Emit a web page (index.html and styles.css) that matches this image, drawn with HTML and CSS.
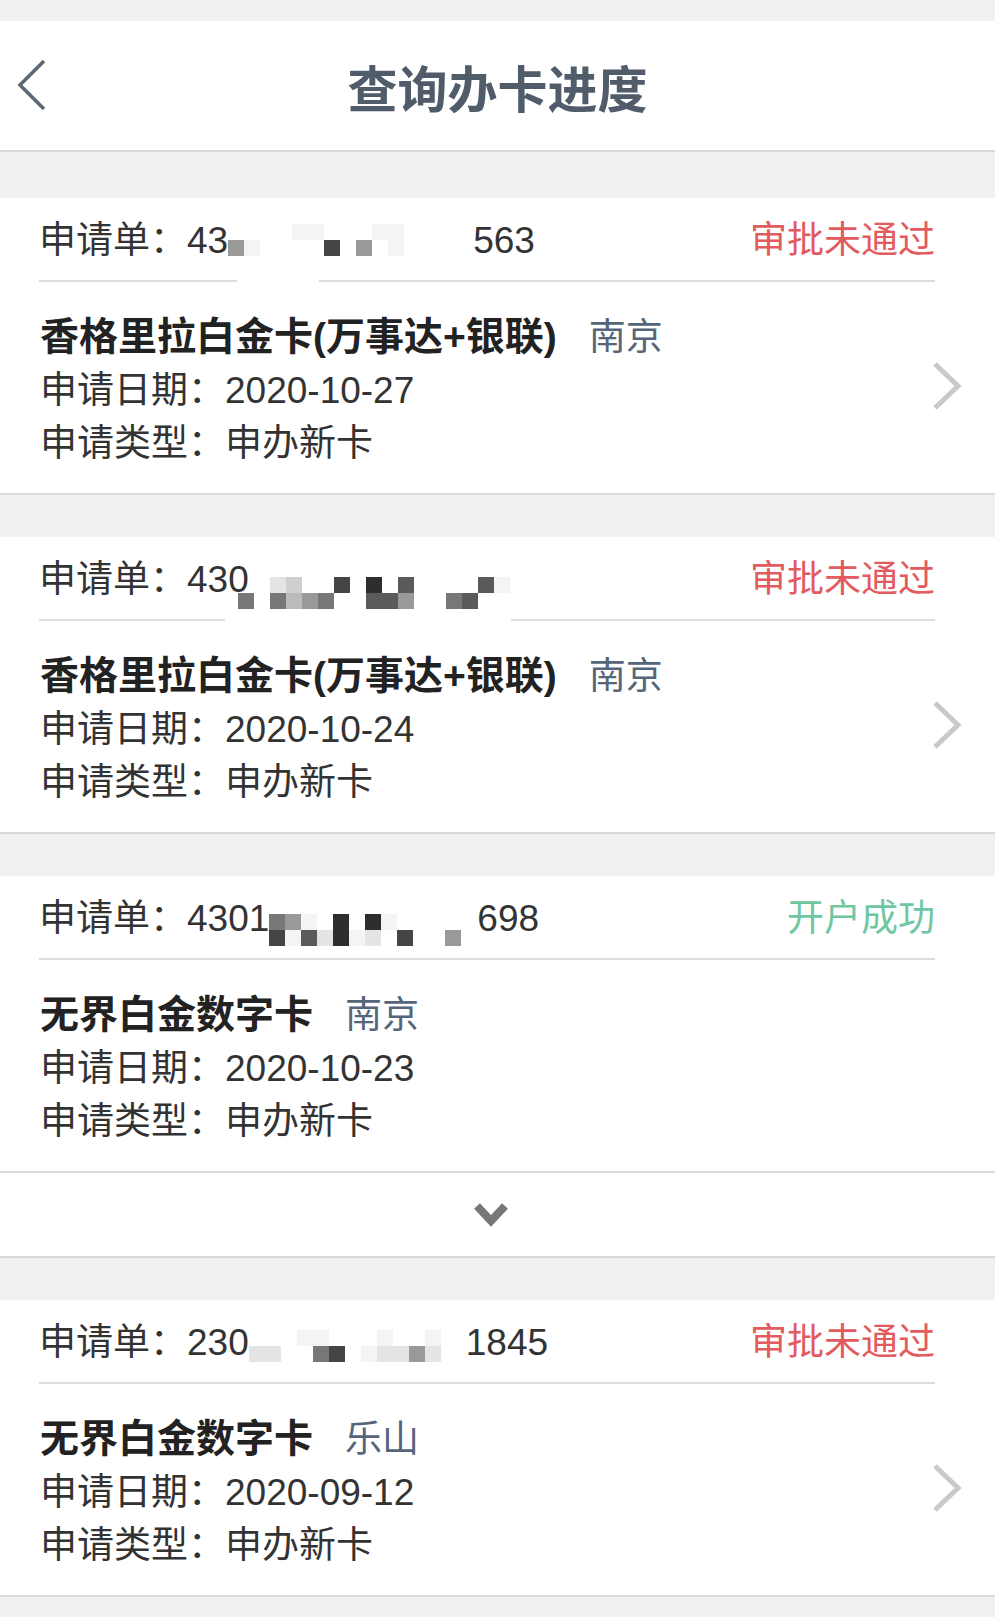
FILE: index.html
```html
<!DOCTYPE html>
<html lang="zh-CN">
<head>
  <meta charset="UTF-8" />
  <meta name="viewport" content="width=device-width, initial-scale=1.0"/>
  <title>查询办卡进度</title>
  <link rel="stylesheet" href="styles.css">
</head>
<body>
  <header class="nav">
    <svg class="nav-back" viewBox="0 0 30 52"><polyline points="27,2 3,26 27,50" /></svg>
    <h1 class="nav-title">查询办卡进度</h1>
    <span></span>
  </header>

  <main class="list">
    <section class="card">
      <div class="card-head">
        <span class="app-no">申请单：43<span class="mosaic m1"><i></i><i></i><i></i><i></i><i class="s1"></i><i class="s1"></i><i></i><i></i><i></i><i class="s1"></i><i class="s1"></i><i></i><i></i><i></i><i></i><i class="s5"></i><i class="s1"></i><i></i><i></i><i></i><i></i><i class="s8"></i><i></i><i class="s5"></i><i></i><i class="s1"></i><i></i><i></i><i></i><i></i></span>563</span>
        <span class="status">审批未通过</span>
      </div>
      <div class="card-body">
        <div class="info">
          <div class="card-name">香格里拉白金卡(万事达+银联)<span class="city">南京</span></div>
          <div class="line">申请日期：2020-10-27</div>
          <div class="line">申请类型：申办新卡</div>
        </div>
        <svg class="arrow" viewBox="0 0 32 50"><polyline points="4,3 27,25 4,47" /></svg>
      </div>
    </section>

    <section class="card">
      <div class="card-head">
        <span class="app-no">申请单：430<span class="mosaic m2"><i></i><i></i><i class="s2"></i><i class="s3"></i><i></i><i></i><i class="s8"></i><i></i><i class="s9"></i><i></i><i class="s7"></i><i></i><i></i><i></i><i></i><i class="s7"></i><i class="s1"></i><i class="s6"></i><i></i><i class="s6"></i><i class="s4"></i><i class="s5"></i><i class="s6"></i><i></i><i></i><i class="s7"></i><i class="s7"></i><i class="s5"></i><i></i><i></i><i class="s6"></i><i class="s7"></i><i></i><i></i></span></span>
        <span class="status">审批未通过</span>
      </div>
      <div class="card-body">
        <div class="info">
          <div class="card-name">香格里拉白金卡(万事达+银联)<span class="city">南京</span></div>
          <div class="line">申请日期：2020-10-24</div>
          <div class="line">申请类型：申办新卡</div>
        </div>
        <svg class="arrow" viewBox="0 0 32 50"><polyline points="4,3 27,25 4,47" /></svg>
      </div>
    </section>

    <div class="card-group">
      <section class="card">
        <div class="card-head">
          <span class="app-no">申请单：4301<span class="mosaic m3"><i class="s6"></i><i class="s5"></i><i class="s1"></i><i></i><i class="s9"></i><i></i><i class="s9"></i><i class="s1"></i><i></i><i></i><i></i><i></i><i></i><i class="s8"></i><i class="s1"></i><i class="s7"></i><i class="s2"></i><i class="s9"></i><i class="s1"></i><i class="s2"></i><i></i><i class="s8"></i><i></i><i></i><i class="s5"></i><i></i></span>698</span>
          <span class="status ok">开户成功</span>
        </div>
        <div class="card-body">
          <div class="info">
            <div class="card-name">无界白金数字卡<span class="city">南京</span></div>
            <div class="line">申请日期：2020-10-23</div>
            <div class="line">申请类型：申办新卡</div>
          </div>
        </div>
      </section>
      <div class="more">
        <svg viewBox="0 0 40 32"><polyline points="6,7 20,22 34,7" /></svg>
      </div>
    </div>

    <section class="card">
      <div class="card-head">
        <span class="app-no">申请单：230<span class="mosaic m4"><i></i><i></i><i></i><i class="s1"></i><i class="s1"></i><i></i><i></i><i></i><i class="s1"></i><i></i><i></i><i class="s1"></i><i></i><i class="s2"></i><i class="s2"></i><i></i><i></i><i class="s6"></i><i class="s8"></i><i></i><i class="s1"></i><i class="s2"></i><i class="s2"></i><i class="s5"></i><i class="s2"></i><i></i></span>1845</span>
        <span class="status">审批未通过</span>
      </div>
      <div class="card-body">
        <div class="info">
          <div class="card-name">无界白金数字卡<span class="city">乐山</span></div>
          <div class="line">申请日期：2020-09-12</div>
          <div class="line">申请类型：申办新卡</div>
        </div>
        <svg class="arrow" viewBox="0 0 32 50"><polyline points="4,3 27,25 4,47" /></svg>
      </div>
    </section>
  </main>
</body>
</html>
```

FILE: styles.css
```css
body {
  margin: 0;
  padding: 21px 0 19px;
  background-color: #f1f1f1;
  font-family: "Liberation Sans", "Noto Sans CJK SC", sans-serif;
  color: #333;
}

/* top bar */
.nav {
  display: grid;
  grid-template-columns: 1fr auto 1fr;
  align-items: center;
  height: 118px;
  padding-top: 11px;
  background-color: #fff;
  border-bottom: 2px solid #d6dade;
}

.nav-back {
  align-self: start;
  width: 30px;
  height: 52px;
  margin: 27px 0 0 17px;
  fill: none;
  stroke: #5b6774;
  stroke-width: 3.5;
}

.nav-title {
  margin: 0;
  font-size: 50px;
  font-weight: 700;
  line-height: 1;
  color: #505c6a;
}

/* list */
.list {
  display: flex;
  flex-direction: column;
  gap: 42px;
  padding-top: 46px;
}

.card-group {
  display: flex;
  flex-direction: column;
}

.card {
  height: 297px;
  box-sizing: border-box;
  background-color: #fff;
  border-bottom: 2px solid #dadada;
}

.card-head {
  display: flex;
  justify-content: space-between;
  align-items: center;
  height: 84px;
  box-sizing: border-box;
  margin: 0 60px 0 39px;
  padding-top: 4px;
  border-bottom: 2px solid #dedede;
  font-size: 37px;
  line-height: 78px;
}

.status {
  color: #e25b5e;
}

.status.ok {
  color: #6fc7a2;
}

.card-body {
  display: flex;
  align-items: center;
  padding: 28px 0 24px 40px;
}

.info {
  flex: 1;
}

.card-name {
  font-size: 39px;
  font-weight: 700;
  line-height: 53px;
  color: #222;
}

.city {
  margin-left: 32px;
  font-size: 37px;
  font-weight: 400;
  color: #55657a;
}

.line {
  font-size: 37px;
  line-height: 53px;
}

.arrow {
  width: 32px;
  height: 50px;
  margin: 0 32px 9px 0;
  fill: none;
  stroke: #c8c9cd;
  stroke-width: 5;
}

.more {
  display: flex;
  justify-content: center;
  align-items: center;
  height: 83px;
  padding-right: 13px;
  background-color: #fff;
  border-bottom: 2px solid #dadada;
}

.more svg {
  width: 40px;
  height: 32px;
  fill: none;
  stroke: #777;
  stroke-width: 8;
}

/* blurred part of the application number */
.mosaic {
  position: relative;
  display: inline-grid;
  grid-template-rows: 16px 16px;
  vertical-align: text-top;
}

.mosaic i {
  display: block;
}

.mosaic .s1 { background-color: #f4f4f4; }
.mosaic .s2 { background-color: #e4e4e4; }
.mosaic .s3 { background-color: #cfcfcf; }
.mosaic .s4 { background-color: #bbb; }
.mosaic .s5 { background-color: #999; }
.mosaic .s6 { background-color: #777; }
.mosaic .s7 { background-color: #5a5a5a; }
.mosaic .s8 { background-color: #444; }
.mosaic .s9 { background-color: #2e2e2e; }

.m1 {
  grid-template-columns: repeat(15, 16px);
  margin-top: 4px;
  margin-right: 5px;
}

.m1::after {
  content: "";
  position: absolute;
  left: 9px;
  top: 32px;
  width: 82px;
  height: 30px;
  background-color: #fff;
}

.m2 {
  grid-template-columns: repeat(17, 16px);
  margin-top: 18px;
  margin-left: -11px;
}

.m2::after {
  content: "";
  position: absolute;
  left: -13px;
  top: 32px;
  width: 286px;
  height: 16px;
  background-color: #fff;
}

.m3 {
  grid-template-columns: repeat(13, 16px);
  margin-top: 16px;
}

.m4 {
  grid-template-columns: repeat(13, 16px);
  margin-top: 8px;
  margin-right: 9px;
}
```
